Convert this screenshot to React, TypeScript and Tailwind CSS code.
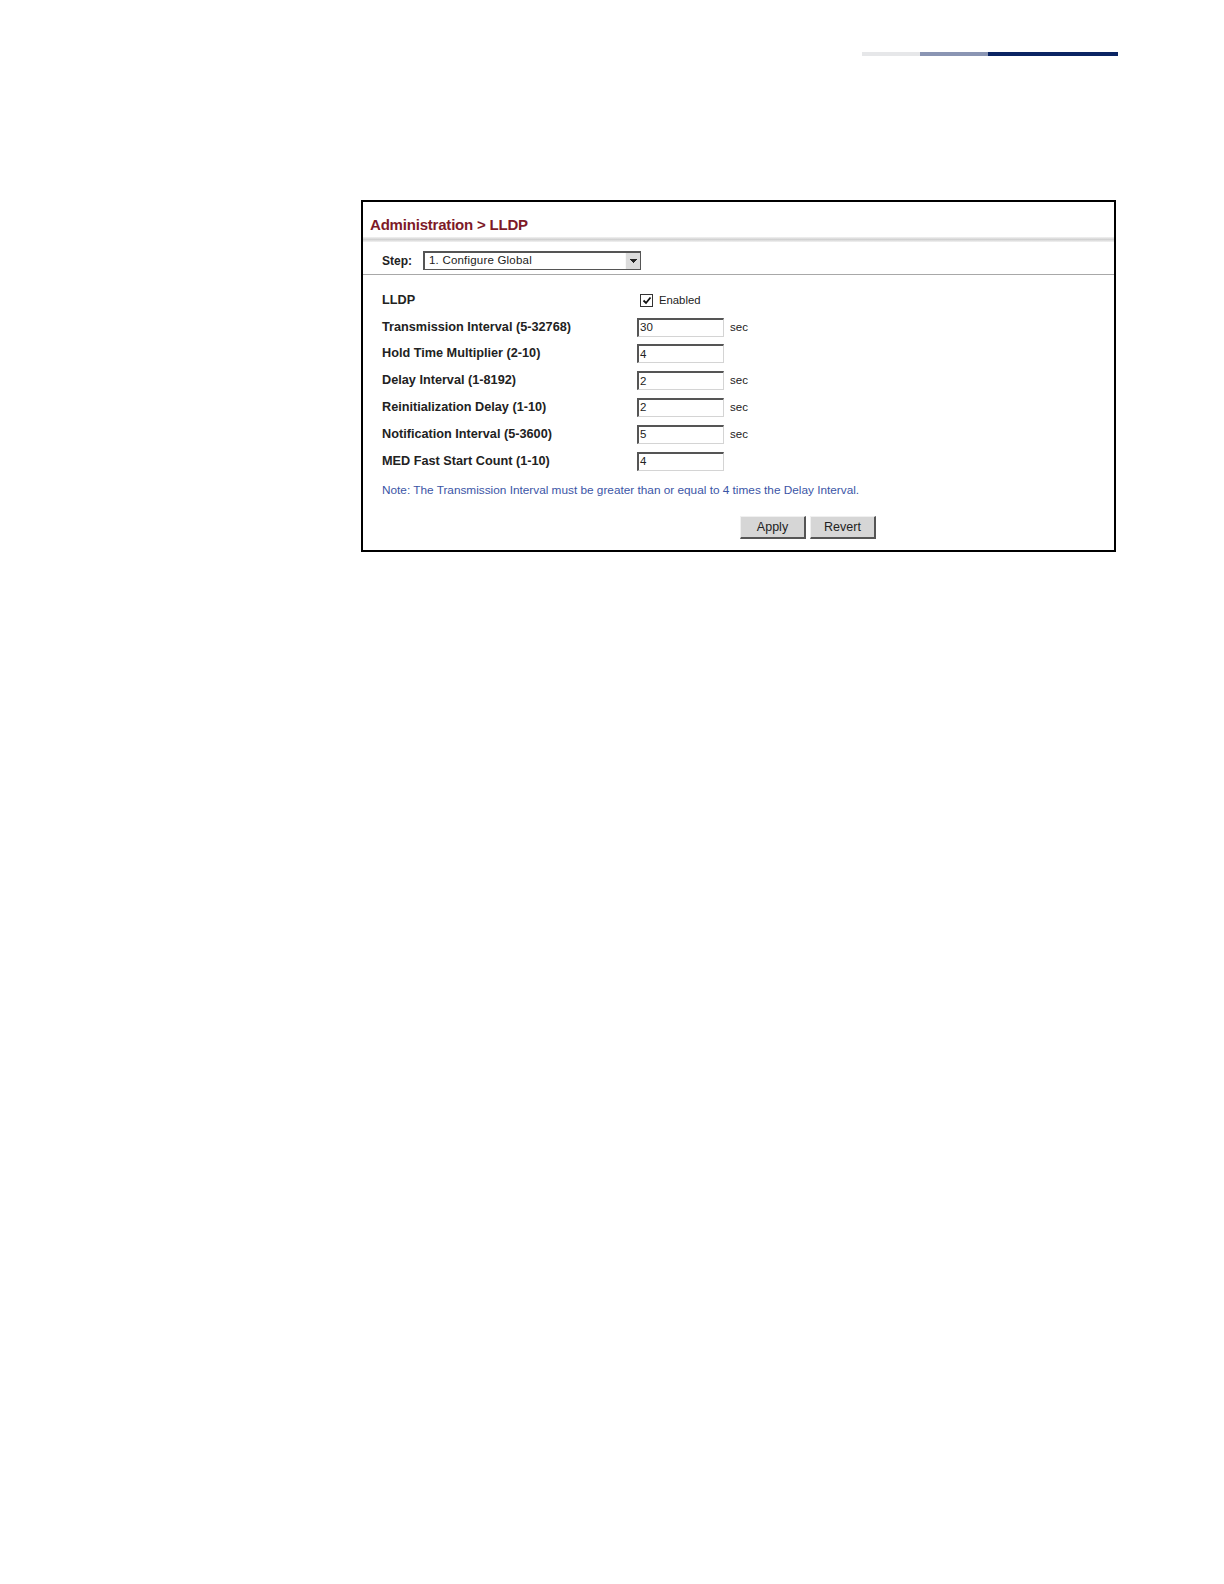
import React from "react";

const rows: { label: string; value: string; sec: boolean }[] = [
  { label: "Transmission Interval (5-32768)", value: "30", sec: true },
  { label: "Hold Time Multiplier (2-10)", value: "4", sec: false },
  { label: "Delay Interval (1-8192)", value: "2", sec: true },
  { label: "Reinitialization Delay (1-10)", value: "2", sec: true },
  { label: "Notification Interval (5-3600)", value: "5", sec: true },
  { label: "MED Fast Start Count (1-10)", value: "4", sec: false },
];

function TextBox({ value }: { value: string }) {
  return (
    <div className="w-[87px] h-[19px] bg-white border-t-2 border-l-2 border-b border-r border-t-[#555] border-l-[#555] border-b-[#d4d4d4] border-r-[#d4d4d4] flex items-center pl-[1px] text-[11.5px] text-[#222] leading-none">
      {value}
    </div>
  );
}

export default function App() {
  return (
    <div
      className="w-[1224px] h-[1584px] bg-white relative"
      style={{ fontFamily: '"Liberation Sans", Arial, sans-serif' }}
    >
      <div className="pt-[52px] pl-[862px] flex">
        <div className="w-[58px] h-[4px] bg-[#e6e7e9]" />
        <div className="w-[68px] h-[4px] bg-[#8a95b3]" />
        <div className="w-[130px] h-[4px] bg-[#0a2463]" />
      </div>

      <div className="ml-[361px] mt-[144px] w-[755px] h-[352px] border-2 border-black flex flex-col">
        <div className="h-[35px] pt-[14px] pl-[7px]">
          <span className="block text-[15px] font-bold text-[#7d1a28] leading-[17px] tracking-[-0.2px]">
            Administration &gt; LLDP
          </span>
        </div>
        <div className="h-[5px] bg-gradient-to-b from-[#f2f2f2] via-[#d2d2d2] to-[#f2f2f2]" />
        <div className="h-[32px] flex items-start pt-[9px] pl-[19px]">
          <span className="text-[12px] font-bold text-[#222] w-[41px] h-[19px] flex items-center">
            Step:
          </span>
          <div className="w-[218px] h-[19px] border border-[#555] border-t-2 border-l-2 flex items-stretch bg-white">
            <div className="flex-1 flex items-center pl-[4px] text-[11.5px] text-[#222] tracking-[0.2px]">
              1. Configure Global
            </div>
            <div className="w-[15px] bg-[#dcdcdc] border-l border-[#f8f8f8] flex items-center justify-center">
              <svg width="9" height="6" viewBox="0 0 9 6">
                <path d="M1 1.5h7M2 2.5h5M3 3.5h3M4 4.5h1" stroke="#222" strokeWidth="1" />
              </svg>
            </div>
          </div>
        </div>
        <div className="h-[1px] bg-[#a8a8a8]" />

        <div className="pt-[12px] pl-[19px] flex flex-col">
          <div className="h-[26.8px] flex items-center">
            <span className="w-[255px] text-[12.7px] font-bold text-[#222]">LLDP</span>
            <div className="flex items-center pl-[3px]">
              <div className="w-[13px] h-[13px] border border-[#333] bg-white flex items-center justify-center">
                <svg width="10" height="9" viewBox="0 0 10 9">
                  <path d="M1.5 4.5 L4 7 L8.5 1.5" stroke="#111" strokeWidth="1.8" fill="none" />
                </svg>
              </div>
              <span className="ml-[6px] text-[11.3px] text-[#222]">Enabled</span>
            </div>
          </div>
          {rows.map((r) => (
            <div key={r.label} className="h-[26.8px] flex items-center">
              <span className="w-[255px] text-[12.7px] font-bold text-[#222]">{r.label}</span>
              <TextBox value={r.value} />
              {r.sec && <span className="ml-[6px] text-[11.5px] text-[#222]">sec</span>}
            </div>
          ))}
        </div>

        <div className="mt-[8px] pl-[19px] text-[11.8px] text-[#3b55a6] leading-[14px]">
          Note: The Transmission Interval must be greater than or equal to 4 times the Delay Interval.
        </div>

        <div className="mt-[19px] pl-[377px] flex gap-[4px]">
          <button className="w-[66px] h-[23px] pt-[2px] bg-[#d6d6d6] border border-[#f0f0f0] border-r-2 border-b-2 border-r-[#555] border-b-[#555] text-[12.5px] text-[#222] flex items-center justify-center">
            Apply
          </button>
          <button className="w-[66px] h-[23px] pt-[2px] bg-[#d6d6d6] border border-[#f0f0f0] border-r-2 border-b-2 border-r-[#555] border-b-[#555] text-[12.5px] text-[#222] flex items-center justify-center">
            Revert
          </button>
        </div>
      </div>
    </div>
  );
}
